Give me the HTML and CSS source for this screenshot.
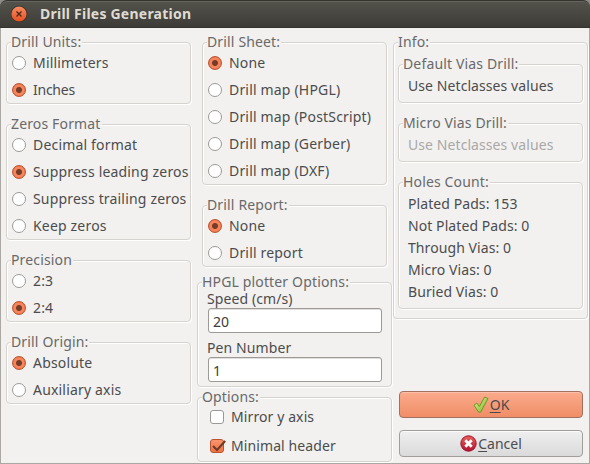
FILE: index.html
```
<!DOCTYPE html>
<html lang="en">
<head>
<meta charset="utf-8">
<title>Drill Files Generation</title>
<link rel="stylesheet" href="styles.css">
</head>
<body>
<div class="window">
  <header class="titlebar">
    <svg class="close" width="18" height="18" viewBox="0 0 18 18">
      <defs><linearGradient id="cg" x1="0" y1="0" x2="0" y2="1"><stop offset="0" stop-color="#f98b62"/><stop offset="1" stop-color="#e5501f"/></linearGradient></defs>
      <circle cx="9" cy="9" r="8.300" fill="#32312c"/>
      <circle cx="9" cy="9" r="7.600" fill="url(#cg)"/>
      <path d="M6.500 6.500l5 5M11.500 6.500l-5 5" stroke="#46281c" stroke-width="1.300"/>
    </svg>
    <h1>Drill Files Generation</h1>
  </header>
  <main class="content">
    <div class="col left">
      <section class="frame"><h2><span>Drill Units:</span></h2>
        <div class="row"><i class="radio"></i>Millimeters</div>
        <div class="row tight"><i class="radio on"></i>Inches</div>
      </section>
      <section class="frame"><h2><span>Zeros Format</span></h2>
        <div class="row"><i class="radio"></i>Decimal format</div>
        <div class="row"><i class="radio on"></i>Suppress leading zeros</div>
        <div class="row"><i class="radio"></i>Suppress trailing zeros</div>
        <div class="row"><i class="radio"></i>Keep zeros</div>
      </section>
      <section class="frame"><h2><span>Precision</span></h2>
        <div class="row"><i class="radio"></i>2:3</div>
        <div class="row"><i class="radio on"></i>2:4</div>
      </section>
      <section class="frame"><h2><span>Drill Origin:</span></h2>
        <div class="row"><i class="radio on"></i>Absolute</div>
        <div class="row"><i class="radio"></i>Auxiliary axis</div>
      </section>
    </div>
    <div class="col middle">
      <section class="frame inset"><h2><span>Drill Sheet:</span></h2>
        <div class="row"><i class="radio on"></i>None</div>
        <div class="row"><i class="radio"></i>Drill map (HPGL)</div>
        <div class="row"><i class="radio"></i>Drill map (PostScript)</div>
        <div class="row"><i class="radio"></i>Drill map (Gerber)</div>
        <div class="row"><i class="radio"></i>Drill map (DXF)</div>
      </section>
      <section class="frame inset"><h2><span>Drill Report:</span></h2>
        <div class="row"><i class="radio on"></i>None</div>
        <div class="row"><i class="radio"></i>Drill report</div>
      </section>
      <section class="frame plotter"><h2><span>HPGL plotter Options:</span></h2>
        <div class="label">Speed (cm/s)</div>
        <div class="input">20</div>
        <div class="label">Pen Number</div>
        <div class="input">1</div>
      </section>
      <section class="frame options"><h2><span>Options:</span></h2>
        <div class="row"><i class="check"></i>Mirror y axis</div>
        <div class="row"><i class="check on"><svg width="18" height="16" viewBox="0 0 18 16"><path d="M4 8l4 4L16.200 3" fill="none" stroke="#6b3a28" stroke-width="2"/></svg></i>Minimal header</div>
      </section>
    </div>
    <div class="col right">
      <section class="frame info"><h2><span>Info:</span></h2>
        <section class="frame vias"><h2><span>Default Vias Drill:</span></h2><p>Use Netclasses values</p></section>
        <section class="frame vias"><h2><span>Micro Vias Drill:</span></h2><p class="off">Use Netclasses values</p></section>
        <section class="frame holes"><h2><span>Holes Count:</span></h2>
          <p>Plated Pads: 153</p><p>Not Plated Pads: 0</p><p>Through Vias: 0</p><p>Micro Vias: 0</p><p>Buried Vias: 0</p>
        </section>
      </section>
      <div class="buttons">
        <div class="button ok">
          <svg width="16" height="18" viewBox="0 0 16 18"><defs><linearGradient id="gg" x1="0" y1="0" x2="1" y2="1"><stop offset="0" stop-color="#e0f49a"/><stop offset="1" stop-color="#7fb522"/></linearGradient></defs><path d="M1 9.200L3.800 7L6.400 10.500L11.600 1L14.900 2.500L7.700 16.200L5.600 16.200Z" fill="url(#gg)" stroke="#6b9a24" stroke-width="1" stroke-linejoin="round"/></svg>
          <span><u>O</u>K</span>
        </div>
        <div class="button">
          <svg width="17" height="17" viewBox="0 0 17 17"><defs><linearGradient id="rg" x1="0" y1="0" x2="0" y2="1"><stop offset="0" stop-color="#e8625a"/><stop offset="1" stop-color="#b01230"/></linearGradient></defs><circle cx="8.500" cy="8.500" r="7.700" fill="url(#rg)" stroke="#a3102a" stroke-width="1"/><path d="M5.300 5.300l6.400 6.400M11.700 5.300l-6.400 6.400" stroke="#fff" stroke-width="2.800"/></svg>
          <span><u>C</u>ancel</span>
        </div>
      </div>
    </div>
  </main>
</div>
</body>
</html>
```
FILE: styles.css
```
* { box-sizing: border-box; }
body {
  margin: 0;
  background: #8f8c88;
  font: 14px/20px "Noto Sans", sans-serif;
  color: #4c4c4c;
}
.window {
  width: 590px;
  height: 464px;
  display: flex;
  flex-direction: column;
  overflow: hidden;
}
.titlebar {
  height: 28px;
  flex: none;
  display: flex;
  align-items: center;
  padding-left: 10px;
  gap: 12px;
  border-radius: 7px 7px 0 0;
  border-top: 1px solid #35342f;
  border-bottom: 1px solid #33322e;
  box-shadow: inset 0 1px #65645d;
  background: linear-gradient(#53524b, #3d3c37);
}
.titlebar h1 {
  margin: 0;
  font-size: 14px;
  font-weight: 700;
  letter-spacing: 0.23px;
  color: #dfdbd2;
  white-space: nowrap;
}
.content {
  flex: 1;
  display: flex;
  background: #f2f1f0;
  border: 1px solid #aba7a2;
  border-top: 0;
  padding-top: 14px;
}
.col { display: flex; flex-direction: column; flex: none; }
.left { width: 185px; margin-left: 5px; gap: 20px; }
.middle { width: 195px; margin-left: 6px; }
.right { width: 195px; margin-left: 1px; }
.frame {
  border: 1px solid #d6d3cf;
  border-radius: 4px;
  box-shadow: 1px 1px #fff, inset 1px 1px #fff;
  padding: 6px 4px 0;
  white-space: nowrap;
}
.frame h2 {
  height: 20px;
  margin: -17px 0 -3px;
  font-size: 14px;
  font-weight: 400;
  letter-spacing: 0.15px;
  color: #696969;
}
.frame h2 span {
  display: inline-block;
  background: linear-gradient(#f2f1f0, #f2f1f0) center / 100% 8px no-repeat;
  padding-right: 1px;
}
.row { height: 27px; display: flex; align-items: center; letter-spacing: 0.18px; }
.tight { letter-spacing: -0.25px; }
.radio {
  flex: none;
  width: 14px;
  height: 14px;
  margin: 0 7px 0 1px;
  border: 1px solid #9c9a97;
  border-radius: 50%;
  background: #fff;
}
.radio.on {
  border-color: #ba5430;
  background: radial-gradient(circle, #753c29 0 2.500px, #f58258 3.500px, #f58761 5px, #ed6f42 6px);
}
.inset { margin-left: 5px; width: 185px; margin-bottom: 20px; }
.plotter { height: 105px; padding: 6px 9px 0 10px; margin-top: -5px; margin-bottom: 10px; }
.plotter h2, .options h2 { margin-left: -6px; }
.label { height: 19px; line-height: 20px; margin-left: -1px; letter-spacing: 0.1px; }
.input {
  height: 25px;
  border: 1px solid #9d9a96;
  border-radius: 3px;
  background: #fff;
  box-shadow: inset 0 1px #e2e0de;
  padding: 2px 4px;
  line-height: 21px;
  color: #3c3c3c;
  margin-bottom: 5px;
}
.options { height: 65px; padding: 5px 4px 0 10px; }
.options h2 { margin-top: -16px; margin-bottom: -5px; }
.options .row { height: 29px; letter-spacing: 0.1px; }
.check {
  flex: none;
  width: 14px;
  height: 14px;
  margin: 0 7px 0 2px;
  border: 1px solid #9c9a97;
  border-radius: 3px;
  background: #fff;
}
.check.on { border-color: #ba5430; background: linear-gradient(#f9966f, #ef7142); }
.check svg { display: block; margin: -2px 0 0 -2px; overflow: visible; }
.info { height: 277px; padding: 21px 4px 0; }
.info > h2 { margin: -32px 0 12px; }
.vias { height: 39px; margin-bottom: 20px; }
.vias, .holes { padding: 11px 4px 0; }
.info .frame h2 { margin: -22px 0 1px; }
.info p { margin: 0 0 0 5px; height: 22px; line-height: 22px; letter-spacing: 0.08px; }
.info .off { color: #aaa8a6; }
.holes { height: 127px; }
.buttons { display: flex; flex-direction: column; gap: 12px; margin: 72px 5px 0 6px; }
.button {
  height: 27px;
  border: 1px solid #a19e9a;
  border-radius: 4px;
  background: linear-gradient(#f0efef, #dadada);
  box-shadow: inset 0 1px #fbfbfb;
  display: flex;
  align-items: center;
  justify-content: center;
  gap: 1px;
}
.ok { border-color: #a1705e; background: linear-gradient(#fbab8c, #f08d66); box-shadow: inset 0 1px #fcc0a8; }
.button u { text-underline-offset: 2px; }
```
